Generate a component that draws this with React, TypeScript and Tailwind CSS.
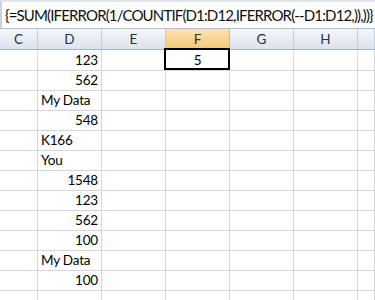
import React from "react";

const rows: { v: string; num: boolean }[] = [
  { v: "123", num: true },
  { v: "562", num: true },
  { v: "My Data", num: false },
  { v: "548", num: true },
  { v: "K166", num: false },
  { v: "You", num: false },
  { v: "1548", num: true },
  { v: "123", num: true },
  { v: "562", num: true },
  { v: "100", num: true },
  { v: "My Data", num: false },
  { v: "100", num: true },
  { v: "", num: false },
];

const cols = ["C", "D", "E", "F", "G", "H", ""];

export default function App() {
  return (
    <div
      className="w-[375px] h-[300px] overflow-hidden bg-white text-black"
      style={{ fontFamily: "Lato, 'Open Sans', sans-serif" }}
    >
      <div className="h-[29px] bg-white border-t-2 border-t-[#dfe6ef] border-b border-b-[#a9bdd4] border-l-2 border-l-[#c5d3e3] flex items-center pl-[3px] pt-[1px]">
        <span className="text-[15px] leading-none whitespace-nowrap tracking-[-0.85px] text-[#111]">
          {"{=SUM(IFERROR(1/COUNTIF(D1:D12,IFERROR(--D1:D12,)),))}"}
        </span>
      </div>
      <div className="grid grid-cols-[38px_64px_64px_64px_64px_64px_1fr] h-[21px] border-b border-b-[#9eb6ce]">
        {cols.map((c, i) => (
          <div
            key={i}
            className={
              c === "F"
                ? "border-r border-r-[#e8b860] bg-gradient-to-b from-[#fbe3b4] to-[#f5c774] flex items-center justify-center text-[13.5px] text-[#333]"
                : "border-r border-r-[#c0cede] bg-gradient-to-b from-[#f4f7fb] to-[#dbe3ee] flex items-center justify-center text-[13.5px] text-[#27313e]"
            }
          >
            {c}
          </div>
        ))}
      </div>
      {rows.map((r, ri) => (
        <div
          key={ri}
          className="grid grid-cols-[38px_64px_64px_64px_64px_64px_1fr] h-[20px]"
        >
          {cols.map((c, ci) => (
            <div
              key={ci}
              className={
                "relative border-r border-b border-[#d4d6da] text-[13.5px] leading-[20px] whitespace-nowrap tracking-[-0.2px] " +
                (c === "D" ? (r.num ? "text-right pr-[3px]" : "pl-[3px]") : "") +
                (c === "F" && ri === 0 ? " text-center" : "")
              }
            >
              {c === "D" ? r.v : c === "F" && ri === 0 ? "5" : ""}
              {c === "F" && ri === 0 && (
                <div className="absolute -left-[2px] -top-[2px] w-[66px] h-[22px] border-2 border-black pointer-events-none" />
              )}
            </div>
          ))}
        </div>
      ))}
    </div>
  );
}
